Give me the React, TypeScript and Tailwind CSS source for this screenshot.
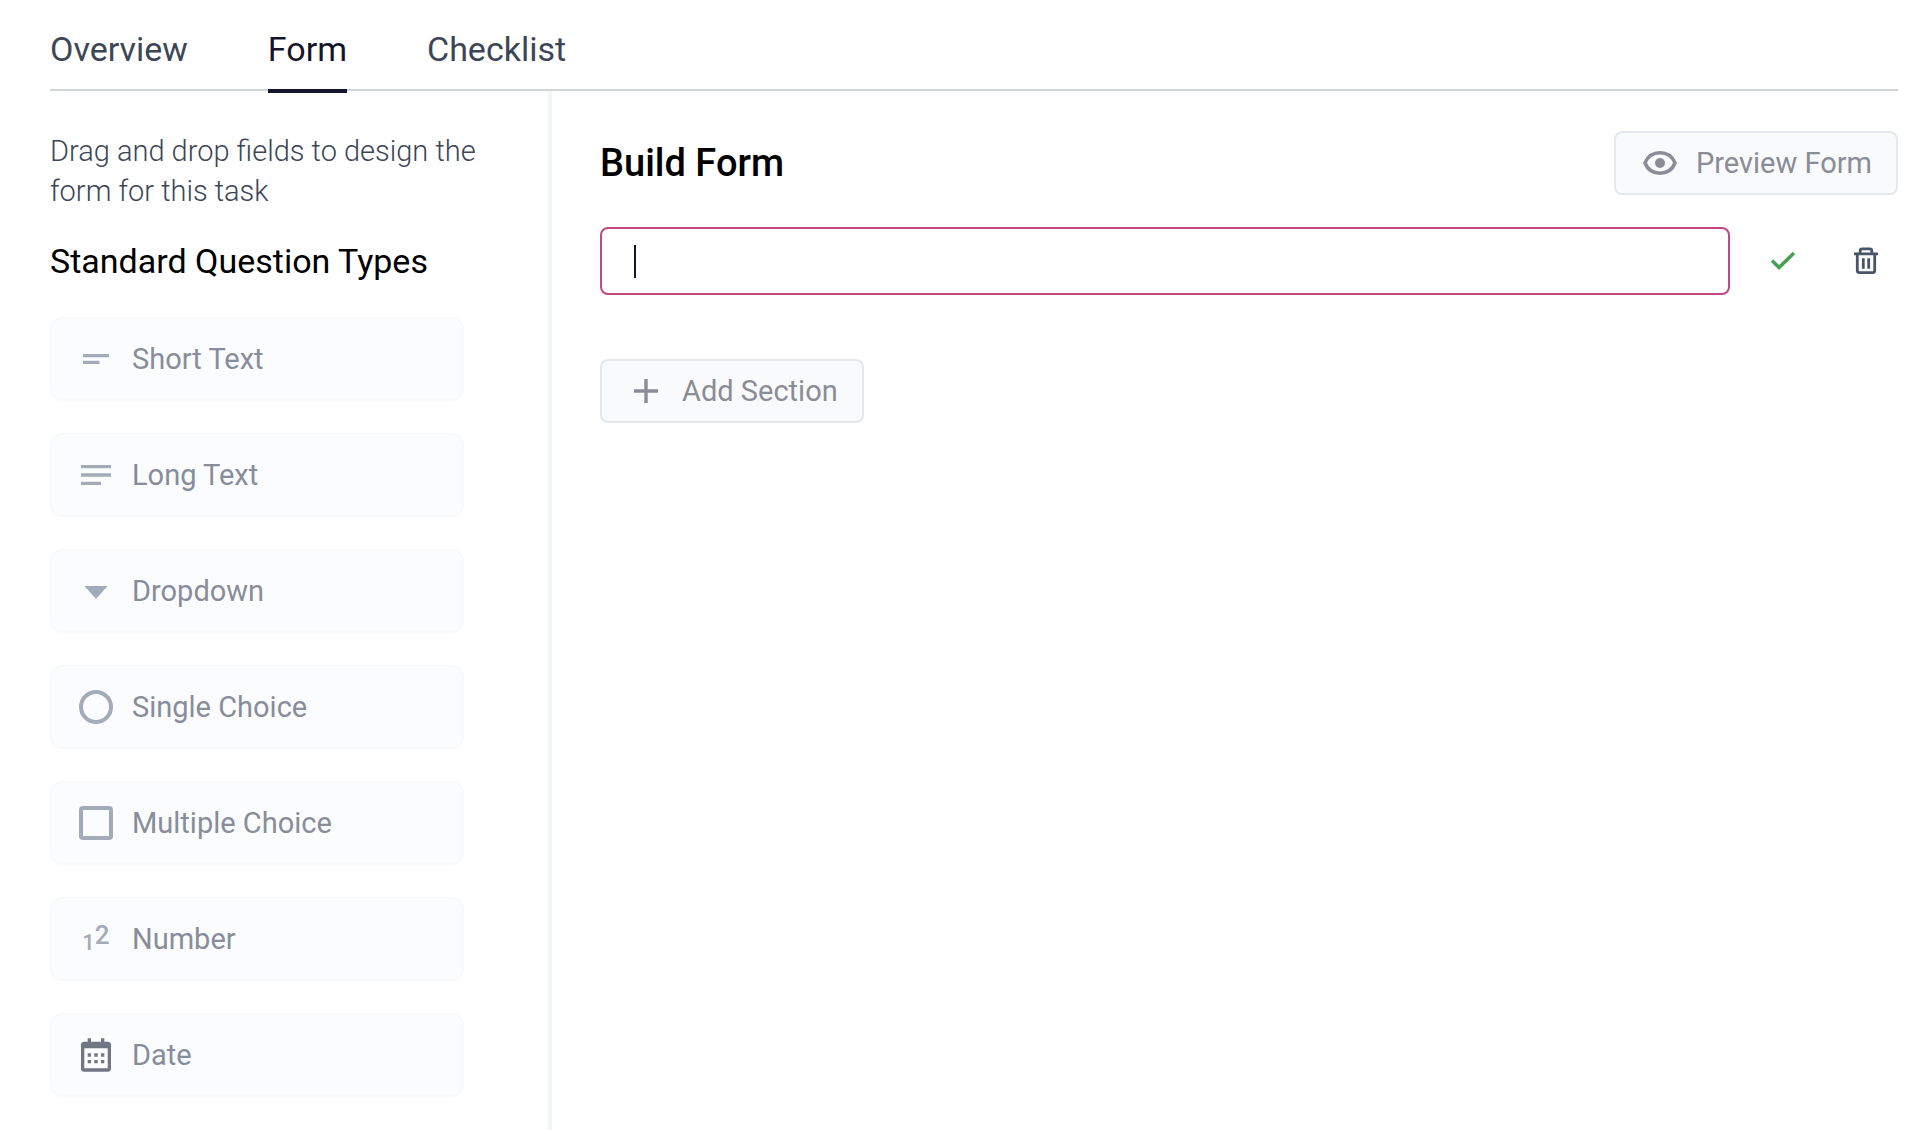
import { useState } from 'react';
import type { ReactNode } from 'react';

type FieldType = {
    label: string;
    icon: ReactNode;
};

const tabs = ['Overview', 'Form', 'Checklist'];

function Icon({ children, className = '' }: { children: ReactNode; className?: string }) {
    return (
        <svg viewBox="0 0 40 40" fill="currentColor" aria-hidden="true" className={`size-10 shrink-0 ${className}`}>
            {children}
        </svg>
    );
}

const fieldTypes: FieldType[] = [
    {
        label: 'Short Text',
        icon: (
            <Icon>
                <path d="M7 15h26v3.3H7zM7 21.7h16.5V25H7z" />
            </Icon>
        ),
    },
    {
        label: 'Long Text',
        icon: (
            <Icon>
                <path d="M5 10h30v3.3H5zM5 18.3h30v3.4H5zM5 26.7h20V30H5z" />
            </Icon>
        ),
    },
    {
        label: 'Dropdown',
        icon: (
            <Icon>
                <path d="M8.5 15h23L20 28z" />
            </Icon>
        ),
    },
    {
        label: 'Single Choice',
        icon: (
            <Icon>
                <circle cx="20" cy="20" r="15" fill="none" stroke="currentColor" strokeWidth="4" />
            </Icon>
        ),
    },
    {
        label: 'Multiple Choice',
        icon: (
            <Icon>
                <rect x="5" y="5" width="30" height="30" rx="2" fill="none" stroke="currentColor" strokeWidth="4" />
            </Icon>
        ),
    },
    {
        label: 'Number',
        icon: (
            <span aria-hidden="true" className="flex size-10 shrink-0 justify-center font-medium">
                <span className="self-end text-[22px] leading-8">1</span>
                <span className="self-start text-[26px] leading-8">2</span>
            </span>
        ),
    },
    {
        label: 'Date',
        icon: (
            <Icon className="text-[#717682]">
                <path
                    fillRule="evenodd"
                    d="M11.7 3.3h3.3v3.4h10V3.3h3.3v3.4h3.4A3.3 3.3 0 0 1 35 10v23.3a3.3 3.3 0 0 1-3.3 3.4H8.3A3.3 3.3 0 0 1 5 33.3V10a3.3 3.3 0 0 1 3.3-3.3h3.4zM8.3 13.3v20h23.4v-20z"
                />
                <path d="M11.7 18.3h3.3v3.4h-3.3zM18.3 18.3h3.4v3.4h-3.4zM25 18.3h3.3v3.4H25zM11.7 25h3.3v3.3h-3.3zM18.3 25h3.4v3.3h-3.4zM25 25h3.3v3.3H25z" />
            </Icon>
        ),
    },
];

const outlineButton =
    'flex h-16 items-center gap-4 rounded-lg border-2 border-[#e5e8ed] bg-[#f9fafc] px-6 text-[29px] leading-10 whitespace-nowrap text-[#8a8c97]';

export default function App() {
    const [activeTab, setActiveTab] = useState('Form');
    const [title, setTitle] = useState('');

    return (
        <div className="flex min-h-screen flex-col bg-white pr-[34px] pl-[50px] font-['Roboto',sans-serif]">
            <nav className="flex gap-20 border-b-2 border-[#d2d5da]">
                {tabs.map((tab) => (
                    <button
                        key={tab}
                        type="button"
                        onClick={() => setActiveTab(tab)}
                        className={
                            tab === activeTab
                                ? '-mb-1 border-b-4 border-[#14142b] pt-[29px] pb-5 text-[34px] leading-10 text-[#14142b]'
                                : '-mb-1 border-b-4 border-transparent pt-[29px] pb-5 text-[34px] leading-10 text-[#3b4657]'
                        }
                    >
                        {tab}
                    </button>
                ))}
            </nav>

            <div className="flex grow">
                <aside className="w-[502px] shrink-0 border-r-4 border-[#f1f5fa] pt-10 pb-8">
                    <p className="pr-16 text-[29px] leading-10 font-light text-[#3b4657]">
                        Drag and drop fields to design the form for this task
                    </p>
                    <h2 className="mt-[30px] text-[34px] leading-10 text-black">Standard Question Types</h2>
                    <ul className="mt-9 mr-[84px] flex flex-col gap-8">
                        {fieldTypes.map((field) => (
                            <li
                                key={field.label}
                                draggable
                                className="flex h-[84px] items-center gap-4 rounded-xl border-2 border-[#f8f9fb] bg-[#fbfcfe] px-6 text-[#a3abb8]"
                            >
                                {field.icon}
                                <span className="text-[29px] leading-10 text-[#878d9a]">{field.label}</span>
                            </li>
                        ))}
                    </ul>
                </aside>

                <main className="grow pt-10 pl-12">
                    <div className="flex items-center justify-between">
                        <h1 className="text-[38px] leading-10 font-medium text-black">Build Form</h1>
                        <button type="button" className={outlineButton}>
                            <Icon>
                                <path
                                    d="M5 20C8 12.5 14 9.8 20 9.8S32 12.5 35 20C32 27.5 26 30.2 20 30.2S8 27.5 5 20z"
                                    fill="none"
                                    stroke="currentColor"
                                    strokeWidth="3.6"
                                    strokeLinejoin="round"
                                />
                                <circle cx="20" cy="20" r="5" />
                            </Icon>
                            Preview Form
                        </button>
                    </div>

                    <div className="mt-8 flex items-center gap-5">
                        <div className="relative grow">
                            <input
                                type="text"
                                aria-label="Section title"
                                value={title}
                                onChange={(e) => setTitle(e.target.value)}
                                className="block h-[68px] w-full rounded-lg border-2 border-[#c44885] bg-white px-8 text-[29px] text-[#14142b] caret-transparent outline-none"
                            />
                            {title === '' && <span className="absolute top-[18px] left-[34px] h-[33px] w-[2px] bg-[#14142b]" />}
                        </div>
                        <button type="button" aria-label="Save section" className="flex size-16 items-center justify-center text-[#45a150]">
                            <Icon>
                                <path d="M10 19.5l7 7L32 12" fill="none" stroke="currentColor" strokeWidth="3.4" />
                            </Icon>
                        </button>
                        <button type="button" aria-label="Delete section" className="flex size-16 items-center justify-center text-[#475569]">
                            <Icon>
                                <path
                                    d="M8 12.8h24M14.2 13V9.8q0-2 2-2h7.6q2 0 2 2V13M11.3 13v16.5q0 2.2 2.2 2.2h13q2.2 0 2.2-2.2V13M17.3 17.2v10.5M22.7 17.2v10.5"
                                    fill="none"
                                    stroke="currentColor"
                                    strokeWidth="2.8"
                                />
                            </Icon>
                        </button>
                    </div>

                    <button type="button" className={`mt-16 ${outlineButton}`}>
                        <Icon>
                            <path d="M18.3 8h3.4v10.3H32v3.4H21.7V32h-3.4V21.7H8v-3.4h10.3z" />
                        </Icon>
                        Add Section
                    </button>
                </main>
            </div>
        </div>
    );
}
